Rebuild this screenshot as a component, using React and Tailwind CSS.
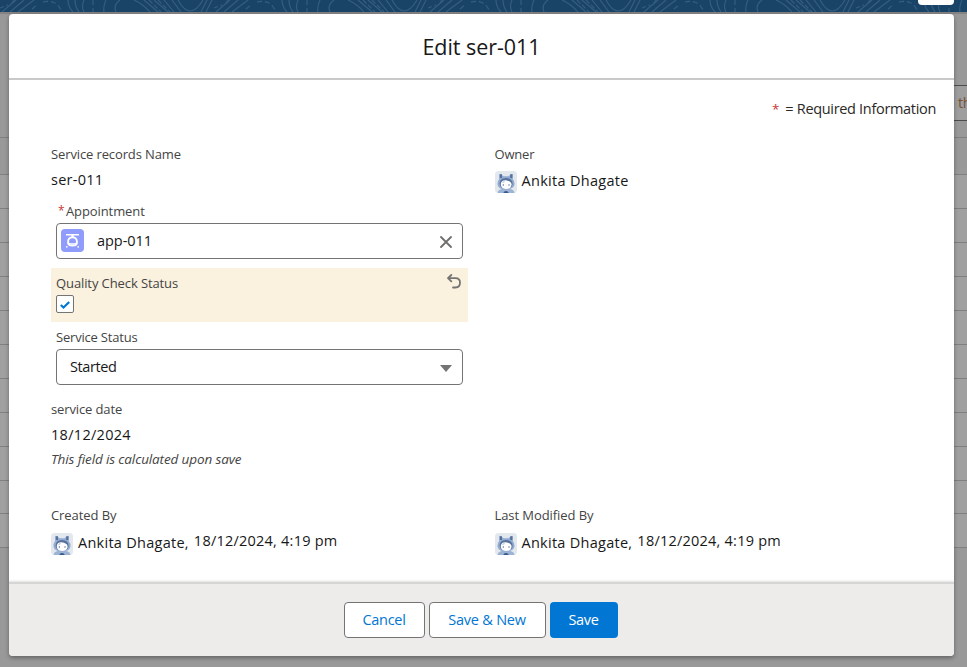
import React from "react";

const rows = [138, 175, 209, 243, 277, 311, 345, 379, 413, 447, 481, 514, 548];

function Contours() {
  return (
    <svg className="block h-3 w-full" viewBox="0 0 967 12" preserveAspectRatio="none">
      <defs>
        <pattern id="topo" width="214" height="12" patternUnits="userSpaceOnUse">
          <g fill="none" stroke="#365d81" strokeWidth="1.1">
            <path d="M0 8L8 5M12 3L14 0" strokeDasharray="4 3" />
            <path d="M2 12L16 0M10 12L24 0M18 12L34 0" />
            <path d="M32 9L38 4M43 2Q50 0 57 4L62 11" strokeDasharray="5 3" />
            <path d="M68 0Q68 7 73 12M75 0Q75 7 79 12M84 0Q81 7 84 12" />
            <path d="M93 0V12" strokeDasharray="5 3" />
            <path d="M106 0Q103 6 104 12M120 0Q113 5 116 12M134 0Q143 4 150 12M144 0L158 12M154 0L168 12" />
            <path d="M149 0L161 12M158 0L170 12" strokeDasharray="5 2" />
            <path d="M164 0L174 12M172 0L181 12M178 0Q190 22 203 0M207 0L201 12M212 0L206 12" />
          </g>
        </pattern>
      </defs>
      <rect width="967" height="12" fill="#194468" />
      <rect width="967" height="12" fill="url(#topo)" />
    </svg>
  );
}

function PageBehind() {
  return (
    <div className="flex h-full flex-col bg-[#999999]">
      <Contours />
      <div className="h-0.5 bg-[#858381]" />
      <div className="h-[71px]" />
      <div className="ml-auto flex h-9 w-[500px] items-center justify-end overflow-hidden border-y border-[#4d4d4d] bg-[#9e9e9e]">
        <span className="w-[9px] text-[14.5px] tracking-[-0.3px] whitespace-nowrap text-[#7a5335]">th</span>
      </div>
      <div className="h-[17px] border-b border-[#808080]" />
      {rows.slice(1).map((y, i) => (
        <div
          key={y}
          className={i === 0 ? "border-b border-[#808080]" : "border-b border-[#808080] bg-[#a0a0a0]"}
          style={{ height: y - rows[i] }}
        />
      ))}
    </div>
  );
}

function Avatar() {
  return (
    <svg className="h-[22px] w-[22px] shrink-0" viewBox="0 0 22 22">
      <defs>
        <clipPath id="avatarClip"><rect width="22" height="22" rx="3.5" /></clipPath>
      </defs>
      <g clipPath="url(#avatarClip)">
        <rect width="22" height="22" fill="#e3e8ee" />
        <path d="M2.500 22Q3 18.500 7 18H15Q19 18.500 19.500 22Z" fill="#9db3d4" />
        <path d="M4.200 8V3.500Q4.800 2.300 6 3.200L8.500 5.200H13.500L16 3.200Q17.300 2.300 17.800 3.500V8Q19.800 10.500 19.500 13.500Q18.500 18.500 11 18.500T2.500 13.500Q2.200 10.500 4.200 8Z" fill="#92abd0" />
        <path d="M4.800 3.200H7V7H4.800ZM15.200 3.200H17.400V7H15.200Z" fill="#56729c" />
        <path d="M4.600 13Q4.600 7 11 7T17.600 13Q17 17.500 11.200 17.500T4.600 13Z" fill="#56729c" />
        <path d="M5.800 14Q5.600 10.500 8.500 9.600Q11 8.800 13.500 10Q16.800 11 16.600 14Q15.800 18 11.200 18T5.800 14Z" fill="#fff" />
        <path d="M7 11.500L9 9.500L10 11L8 12Z" fill="#c5d1e3" />
        <circle cx="8.300" cy="14" r=".75" fill="#56729c" />
        <circle cx="14" cy="14" r=".75" fill="#56729c" />
        <path d="M8.300 22Q8.800 19.900 11 19.900T13.700 22Z" fill="#375b8c" />
      </g>
    </svg>
  );
}

function AppointmentIcon() {
  return (
    <svg className="-mt-px h-[23px] w-[23px] shrink-0" viewBox="0 0 23 23">
      <rect width="23" height="23" rx="4" fill="#8f9cfb" />
      <g fill="none" stroke="#fff">
        <path d="M5 5.700H18" strokeWidth="1.500" />
        <path d="M11.500 5.500V8.500" strokeWidth="2.400" />
        <path d="M11.500 8.400C8.500 8.400 7 10.500 7 13.200C7 15.800 8.500 16.600 11.500 16.600S16 15.800 16 13.200C16 10.500 14.500 8.400 11.500 8.400Z" strokeWidth="1.800" />
        <path d="M7.500 14.300Q11.500 15.600 15.500 14.300" strokeWidth="1.400" />
      </g>
      <circle cx="5.800" cy="17.800" r=".9" fill="#fff" />
      <circle cx="17.200" cy="17.800" r=".9" fill="#fff" />
    </svg>
  );
}

const label = "h-5 text-[13px] leading-5 whitespace-nowrap text-[#444444]";
const value = "text-[14.5px] leading-5 whitespace-nowrap text-[#181818]";

export default function App() {
  return (
    <div className="relative h-[667px] w-[967px] overflow-hidden font-['Open_Sans','Noto_Sans',sans-serif]">
      <PageBehind />
      <div className="absolute top-0 left-[918px] h-[5px] w-9 rounded-b-[4px] bg-white" />

      <section className="absolute top-3.5 left-[9px] flex h-[642px] w-[945px] flex-col overflow-hidden rounded-[4px] bg-white shadow-[0_2px_4px_rgba(0,0,0,0.35)]">
        <header className="flex h-[66px] shrink-0 items-center justify-center border-b-2 border-[#c9c9c9] pt-px">
          <h1 className="text-[21.5px] leading-7 tracking-[-0.05px] whitespace-nowrap text-[#181818]">Edit ser-011</h1>
        </header>

        <main className="flex h-[502px] shrink-0 flex-col pr-[18px] pl-[42px]">
          <div className="flex h-[64px] items-start justify-end pt-[19px]">
            <span className="mr-[6px] text-[13.5px] leading-5 text-[#c23934]">*</span>
            <span className="text-[14.5px] leading-5 tracking-[-0.32px] whitespace-nowrap text-[#2b2826]">= Required Information</span>
          </div>

          <div className="grid h-[361px] shrink-0 grid-cols-[417px_1fr] gap-x-[26.5px]">
            <div className="flex flex-col">
              <div className={`${label} tracking-[-0.12px]`}>Service records Name</div>
              <div className={`${value} mt-[6px] tracking-[0.25px]`}>ser-011</div>
              <div className="mt-[11px] flex h-5 items-center pl-[7px]">
                <span className="w-[8px] text-[12px] leading-5 text-[#c23934]">*</span>
                <span className={`${label} tracking-[-0.1px]`}>Appointment</span>
              </div>
              <div className="mt-[2px] ml-[5px] flex h-9 w-[407px] shrink-0 items-center rounded-[4px] border border-[#747474] pr-[10px] pl-1">
                <AppointmentIcon />
                <span className={`${value} ml-[13px] tracking-[-0.05px]`}>app-011</span>
                <svg className="mt-0.5 ml-auto h-3 w-3" viewBox="0 0 12 12">
                  <path d="M1 1L11 11M11 1L1 11" fill="none" stroke="#706e6b" strokeWidth="1.8" strokeLinecap="round" />
                </svg>
              </div>
              <div className="mt-[9px] flex h-[54px] shrink-0 items-start justify-between bg-[#faf1df] pr-[7px] pl-[5px]">
                <div className="flex flex-col pt-[5px]">
                  <div className={`${label} tracking-[-0.1px]`}>Quality Check Status</div>
                  <span className="mt-[2px] flex h-[18px] w-[18px] items-center justify-center rounded-[2px] border border-[#747474] bg-white">
                    <svg className="mt-px h-2.5 w-2.5" viewBox="0 0 10 10">
                      <path d="M.8 5L3.500 7.600L9.200 2.100" fill="none" stroke="#0176d3" strokeWidth="2.100" />
                    </svg>
                  </span>
                </div>
                <svg className="mt-[6px] h-[15px] w-[14px]" viewBox="0 0 14 15">
                  <path d="M4.300 1L1 4.200L4.300 7.400M1.200 4.200H8.500C11.500 4.200 13 6.300 13 8.800C13 11.800 11.200 13.500 8.500 13.500H6" fill="none" stroke="#747474" strokeWidth="1.800" strokeLinecap="round" strokeLinejoin="round" />
                </svg>
              </div>
              <div className={`${label} mt-[5px] ml-[5px] tracking-[-0.2px]`}>Service Status</div>
              <div className="mt-[2px] ml-[5px] flex h-9 w-[407px] shrink-0 items-center justify-between rounded-[4px] border border-[#747474] pr-[10px] pl-[13px]">
                <span className={`${value} tracking-[-0.42px]`}>Started</span>
                <svg className="mt-0.5 h-[7px] w-3" viewBox="0 0 12 7">
                  <path d="M0 0H12L6 7Z" fill="#747474" />
                </svg>
              </div>
              <div className={`${label} mt-[14px] tracking-[-0.12px]`}>service date</div>
              <div className={`${value} mt-[6px] tracking-[0.3px]`}>18/12/2024</div>
              <div className="mt-[4px] text-[13.5px] leading-5 tracking-[-0.12px] whitespace-nowrap text-[#444444] italic">This field is calculated upon save</div>
            </div>

            <div className="flex flex-col">
              <div className={`${label} tracking-[-0.2px]`}>Owner</div>
              <div className="mt-[7px] flex items-start">
                <Avatar />
                <span className={`${value} ml-[5px] tracking-[0.3px]`}>Ankita Dhagate</span>
              </div>
            </div>
          </div>

          <div className="grid grid-cols-[417px_1fr] gap-x-[26.5px]">
            {["Created By", "Last Modified By"].map((name) => (
              <div key={name} className="flex flex-col">
                <div className={`${label} tracking-[-0.08px]`}>{name}</div>
                <div className="mt-[6px] flex items-start">
                  <div className="pt-[2px]"><Avatar /></div>
                  <span className={`${value} mt-[2px] ml-[5px] tracking-[0.27px]`}>Ankita Dhagate,</span>
                  <span className={`${value} ml-[5px] tracking-[0.23px]`}>18/12/2024, 4:19 pm</span>
                </div>
              </div>
            ))}
          </div>
        </main>

        <footer className="flex flex-1 items-center justify-center gap-1 border-t-2 border-[#d5d5d4] bg-[#edeceb] pr-[2px] shadow-[0_-1px_2px_rgba(0,0,0,0.12)]">
          <button className="h-9 w-[81px] rounded-[4px] border border-[#747474] bg-white text-[14.5px] leading-5 tracking-[-0.3px] whitespace-nowrap text-[#0176d3]">Cancel</button>
          <button className="h-9 w-[117px] rounded-[4px] border border-[#747474] bg-white text-[14.5px] leading-5 tracking-[-0.22px] whitespace-nowrap text-[#0176d3]">Save &amp; New</button>
          <button className="h-9 w-[68px] rounded-[4px] bg-[#0176d3] text-[14.5px] leading-5 tracking-[-0.3px] whitespace-nowrap text-white">Save</button>
        </footer>
      </section>
    </div>
  );
}
